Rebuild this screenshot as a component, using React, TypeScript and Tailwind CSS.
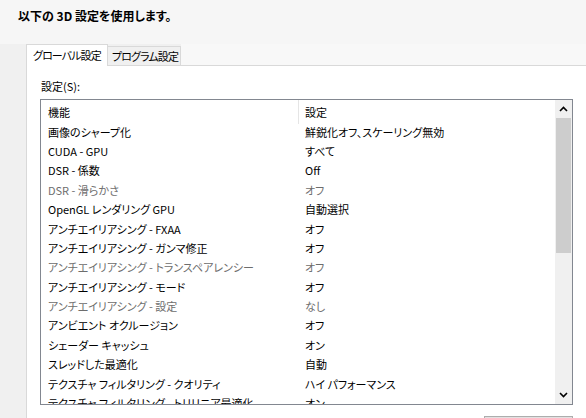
import React from "react";

const rows: [string, string, boolean][] = [
  ["画像のシャープ化", "鮮鋭化オフ、スケーリング無効", true],
  ["CUDA - GPU", "すべて", true],
  ["DSR - 係数", "Off", true],
  ["DSR - 滑らかさ", "オフ", false],
  ["OpenGL レンダリング GPU", "自動選択", true],
  ["アンチエイリアシング - FXAA", "オフ", true],
  ["アンチエイリアシング - ガンマ修正", "オフ", true],
  ["アンチエイリアシング - トランスペアレンシー", "オフ", false],
  ["アンチエイリアシング - モード", "オフ", true],
  ["アンチエイリアシング - 設定", "なし", false],
  ["アンビエント オクルージョン", "オフ", true],
  ["シェーダー キャッシュ", "オン", true],
  ["スレッドした最適化", "自動", true],
  ["テクスチャ フィルタリング - クオリティ", "ハイ パフォーマンス", true],
  ["テクスチャ フィルタリング - トリリニア最適化", "オン", true],
];

export default function App() {
  return (
    <div
      className="w-[586px] h-[418px] overflow-hidden bg-[#f0f0f0] flex flex-col text-[11px] text-black [font-feature-settings:'palt'] leading-none"
      style={{ fontFamily: '"Noto Sans CJK JP", "Noto Sans", sans-serif' }}
    >
      <div className="h-[44px] shrink-0 bg-[#f6f6f6] pl-[18px] pt-[10px] font-bold text-[12px] whitespace-nowrap">
        以下の 3D 設定を使用します。
      </div>
      <div className="h-[21px] shrink-0 flex items-end bg-[#f0f0f0] whitespace-nowrap text-[11px] tracking-[-0.9px]">
        <div className="w-[26px] self-stretch" />
        <div className="h-[22px] -mb-px w-[82px] bg-white border border-b-0 border-[#d9d9d9] flex items-center pl-[6px] relative z-10">
          グローバル設定
        </div>
        <div className="h-[19px] w-[73px] bg-[#f0f0f0] border border-l-0 border-b-0 border-[#d9d9d9] flex items-center pl-[4px]">
          プログラム設定
        </div>
        <div className="flex-1 self-stretch bg-[#f8f8f8]" />
      </div>
      <div className="flex-1 flex">
        <div className="w-[26px] shrink-0" />
        <div className="flex-1 bg-white border-l border-t border-[#d9d9d9] pl-[13px] pt-[13px] flex flex-col">
          <div className="h-[14px] pl-px flex items-center">設定(S):</div>
          <div className="mt-[6px] w-[533px] h-[306px] border border-[#828790] flex shrink-0 overflow-hidden">
            <div className="flex-1 pt-[3px] overflow-hidden">
              <div className="flex h-[19.4px] items-center">
                <div className="w-[257px] pl-[7px]">機能</div>
                <div className="w-px h-[24px] bg-[#e5e5e5] self-start -mt-[3px]" />
                <div className="pl-[6px]">設定</div>
              </div>
              {rows.map(([a, b, en], i) => (
                <div
                  key={i}
                  className={`flex h-[19.4px] items-center whitespace-nowrap ${en ? "text-black" : "text-[#6d6d6d]"}`}
                >
                  <div className="w-[258px] pl-[7px]">{a}</div>
                  <div className="pl-[6px]">{b}</div>
                </div>
              ))}
            </div>
            <div className="w-[17px] shrink-0 bg-[#f0f0f0] flex flex-col">
              <div className="h-[18px] flex items-center justify-center">
                <svg width="9" height="6" viewBox="0 0 9 6">
                  <path d="M1 5 L4.5 1.5 L8 5" fill="none" stroke="#000" strokeWidth="1.6" />
                </svg>
              </div>
              <div className="mx-[1px] h-[135px] bg-[#cdcdcd]" />
              <div className="flex-1" />
              <div className="h-[18px] flex items-center justify-center">
                <svg width="9" height="6" viewBox="0 0 9 6">
                  <path d="M1 1 L4.5 4.5 L8 1" fill="none" stroke="#000" strokeWidth="1.6" />
                </svg>
              </div>
            </div>
          </div>
          <div className="flex justify-end w-[533px] mt-[11px]">
            <div className="w-[89px] h-[24px] border border-[#adadad] bg-[#e1e1e1]" />
          </div>
        </div>
      </div>
    </div>
  );
}
